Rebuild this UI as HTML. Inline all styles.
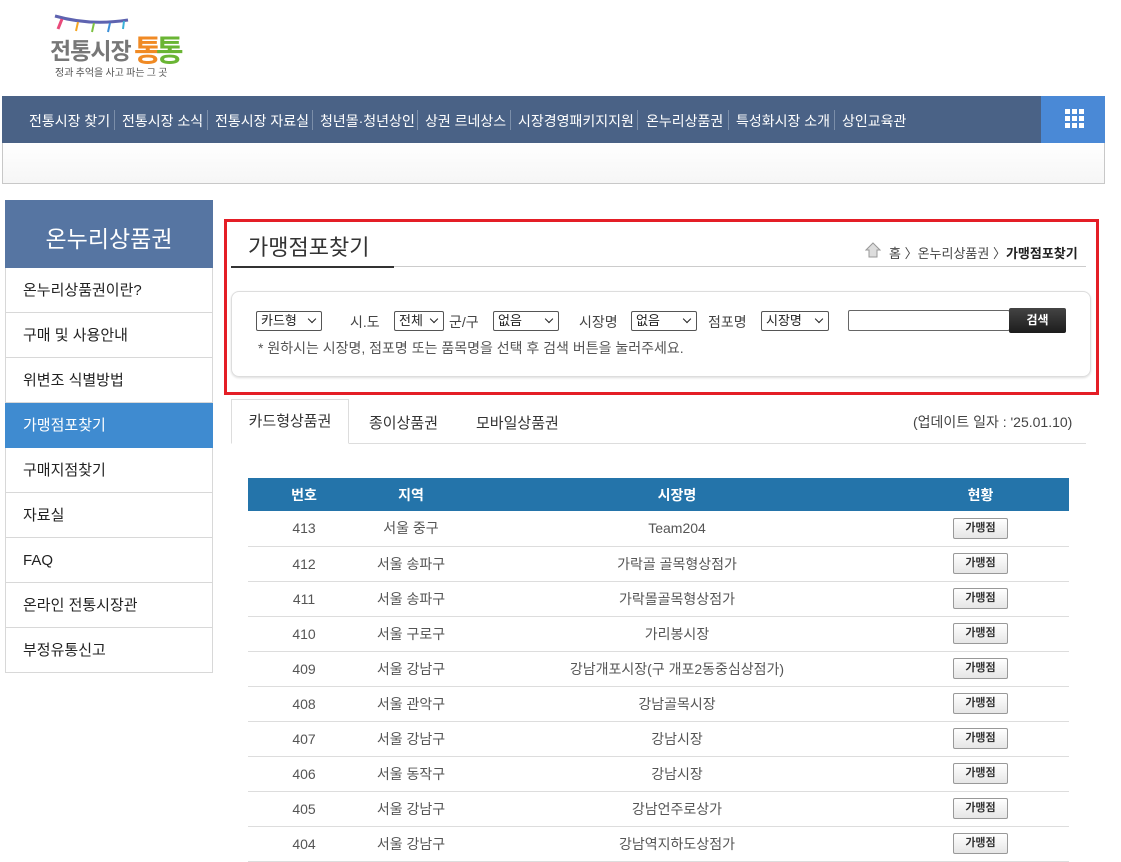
<!DOCTYPE html>
<html><head><meta charset="utf-8">
<style>
*{margin:0;padding:0;box-sizing:border-box}
body{width:1121px;height:845px;overflow:hidden;background:#fff;font-family:"Liberation Sans","Noto Sans CJK KR",sans-serif;color:#333;position:relative}
.a{position:absolute}
.nav{left:2px;top:96px;width:1103px;height:47px;background:#4a6286}
.nav span{position:absolute;top:15px;font-size:14px;color:#fff;white-space:nowrap}
.sep{position:absolute;top:14px;width:1px;height:20px;background:#7b8ea9}
.grid{left:1041px;top:96px;width:64px;height:47px;background:#4a89d6}
.sub{left:2px;top:143px;width:1103px;height:41px;border:1px solid #c8c8c8;border-top:none;background:linear-gradient(#fff,#f6f6f6)}
.side{left:5px;top:200px;width:208px}
.sh{height:68px;background:#5675a2;color:#fff;font-size:23px;text-align:center;line-height:78px}
.si{height:45px;border:1px solid #d8d8d8;border-top:none;font-size:15px;line-height:46px;padding-left:17px;color:#222}
.si.on{background:#3f8bd0;color:#fff;border-color:#3f8bd0}
.red{left:224px;top:219px;width:875px;height:176px;border:3px solid #e41e26}
.sel{position:absolute;top:311px;height:20px;border:1px solid #555;border-radius:2px;font-size:13px;line-height:18px;padding-left:4px;color:#222;background:#fff}
.sel:after{content:"";position:absolute;right:6px;top:4px;width:5px;height:5px;border-right:1.5px solid #222;border-bottom:1.5px solid #222;transform:rotate(45deg)}
.lb{position:absolute;top:312px;font-size:14px;color:#444}
table{position:absolute;left:248px;top:478px;width:821px;border-collapse:collapse;font-size:14px}
th{background:#2474aa;color:#fff;height:33px;font-weight:bold;font-size:14px}
td{height:35px;text-align:center;border-bottom:1px solid #ddd;color:#555}
.btn{display:inline-block;width:55px;height:21px;border:1px solid #999;border-radius:2px;background:linear-gradient(#fff,#e6e6e6);font-size:11px;line-height:19px;font-weight:bold;color:#333}
</style></head><body>
<svg class="a" style="left:50px;top:12px" width="140" height="70">
<path d="M5 4 Q40 14 78 8" stroke="#5e63b0" stroke-width="3" fill="none"/>
<path d="M12 7 l-4 10" stroke="#e94b7a" stroke-width="3"/><path d="M28 10 l-2 9" stroke="#f5a623" stroke-width="2"/><path d="M44 11 l-2 9" stroke="#7dc142" stroke-width="2"/><path d="M60 11 l-2 9" stroke="#3a8fd8" stroke-width="2"/><path d="M74 9 l-1 8" stroke="#3ab0d8" stroke-width="2"/>
<text x="0" y="47" font-size="23" font-weight="bold" fill="#777" font-family="Noto Sans CJK KR,sans-serif" letter-spacing="-1">전통시장</text>
<text x="84" y="49" font-size="30" font-weight="bold" fill="#f08a24" font-family="Noto Sans CJK KR,sans-serif">통</text>
<text x="106" y="49" font-size="30" font-weight="bold" fill="#6ab534" font-family="Noto Sans CJK KR,sans-serif">통</text>
<text x="5" y="64" font-size="10" fill="#555" font-family="Noto Sans CJK KR,sans-serif">정과 추억을 사고 파는 그 곳</text>
</svg>
<div class="a nav">
<span style="left:27px">전통시장 찾기</span><i class="sep" style="left:112px"></i>
<span style="left:120px">전통시장 소식</span><i class="sep" style="left:205px"></i>
<span style="left:213px">전통시장 자료실</span><i class="sep" style="left:310px"></i>
<span style="left:318px">청년몰·청년상인</span><i class="sep" style="left:415px"></i>
<span style="left:423px">상권 르네상스</span><i class="sep" style="left:508px"></i>
<span style="left:516px">시장경영패키지지원</span><i class="sep" style="left:635px"></i>
<span style="left:644px">온누리상품권</span><i class="sep" style="left:726px"></i>
<span style="left:734px">특성화시장 소개</span><i class="sep" style="left:832px"></i>
<span style="left:840px">상인교육관</span>
</div>
<div class="a grid"><svg style="position:absolute;left:24px;top:13px" width="20" height="20" fill="#fff"><rect x="0" y="0" width="5" height="5"/><rect x="7" y="0" width="5" height="5"/><rect x="14" y="0" width="5" height="5"/><rect x="0" y="7" width="5" height="5"/><rect x="7" y="7" width="5" height="5"/><rect x="14" y="7" width="5" height="5"/><rect x="0" y="14" width="5" height="5"/><rect x="7" y="14" width="5" height="5"/><rect x="14" y="14" width="5" height="5"/></svg></div>
<div class="a sub"></div>
<div class="a side">
<div class="sh">온누리상품권</div>
<div class="si">온누리상품권이란?</div>
<div class="si">구매 및 사용안내</div>
<div class="si">위변조 식별방법</div>
<div class="si on">가맹점포찾기</div>
<div class="si">구매지점찾기</div>
<div class="si">자료실</div>
<div class="si">FAQ</div>
<div class="si">온라인 전통시장관</div>
<div class="si">부정유통신고</div>
</div>
<div class="a red"></div>
<div class="a" style="left:248px;top:230px;font-size:22px;color:#333">가맹점포찾기</div>
<div class="a" style="left:231px;top:266px;width:855px;height:1px;background:#ccc"></div>
<div class="a" style="left:231px;top:266px;width:163px;height:2px;background:#333"></div>
<svg class="a" style="left:865px;top:242px" width="16" height="16"><path d="M8 1 L15 8 H12 V15 H4 V8 H1Z" fill="#ddd" stroke="#999"/></svg>
<div class="a" style="left:889px;top:243px;font-size:13px;color:#444">홈 〉온누리상품권 〉<b style="color:#222">가맹점포찾기</b></div>
<div class="a" style="left:231px;top:291px;width:860px;height:86px;border:1px solid #ddd;border-radius:8px;box-shadow:0 1px 2px #ddd"></div>
<div class="sel" style="left:256px;width:66px">카드형</div>
<div class="lb" style="left:350px">시.도</div>
<div class="sel" style="left:394px;width:50px">전체</div>
<div class="lb" style="left:449px">군/구</div>
<div class="sel" style="left:493px;width:66px">없음</div>
<div class="lb" style="left:579px">시장명</div>
<div class="sel" style="left:631px;width:66px">없음</div>
<div class="lb" style="left:708px">점포명</div>
<div class="sel" style="left:761px;width:68px">시장명</div>
<div class="a" style="left:848px;top:310px;width:162px;height:21px;border:1px solid #666;border-radius:2px"></div>
<div class="a" style="left:1009px;top:308px;width:57px;height:25px;background:linear-gradient(#444,#1c1c1c);border-radius:2px;color:#fff;font-size:12px;font-weight:bold;text-align:center;line-height:25px">검색</div>
<div class="a" style="left:258px;top:338px;font-size:14px;color:#555">* 원하시는 시장명, 점포명 또는 품목명을 선택 후 검색 버튼을 눌러주세요.</div>
<div class="a" style="left:231px;top:443px;width:855px;height:1px;background:#ddd"></div>
<div class="a" style="left:231px;top:399px;width:118px;height:45px;border:1px solid #ddd;border-bottom:1px solid #fff;background:#fff;font-size:15px;text-align:center;line-height:44px">카드형상품권</div>
<div class="a" style="left:369px;top:412px;font-size:15px">종이상품권</div>
<div class="a" style="left:476px;top:412px;font-size:15px">모바일상품권</div>
<div class="a" style="left:913px;top:412px;font-size:14px;color:#444">(업데이트 일자 : '25.01.10)</div>
<table>
<tr><th style="width:112px">번호</th><th style="width:102px">지역</th><th style="width:430px">시장명</th><th>현황</th></tr>
<tr><td>413</td><td>서울 중구</td><td>Team204</td><td><span class="btn">가맹점</span></td></tr>
<tr><td>412</td><td>서울 송파구</td><td>가락골 골목형상점가</td><td><span class="btn">가맹점</span></td></tr>
<tr><td>411</td><td>서울 송파구</td><td>가락몰골목형상점가</td><td><span class="btn">가맹점</span></td></tr>
<tr><td>410</td><td>서울 구로구</td><td>가리봉시장</td><td><span class="btn">가맹점</span></td></tr>
<tr><td>409</td><td>서울 강남구</td><td>강남개포시장(구 개포2동중심상점가)</td><td><span class="btn">가맹점</span></td></tr>
<tr><td>408</td><td>서울 관악구</td><td>강남골목시장</td><td><span class="btn">가맹점</span></td></tr>
<tr><td>407</td><td>서울 강남구</td><td>강남시장</td><td><span class="btn">가맹점</span></td></tr>
<tr><td>406</td><td>서울 동작구</td><td>강남시장</td><td><span class="btn">가맹점</span></td></tr>
<tr><td>405</td><td>서울 강남구</td><td>강남언주로상가</td><td><span class="btn">가맹점</span></td></tr>
<tr><td>404</td><td>서울 강남구</td><td>강남역지하도상점가</td><td><span class="btn">가맹점</span></td></tr>
</table>
</body></html>
